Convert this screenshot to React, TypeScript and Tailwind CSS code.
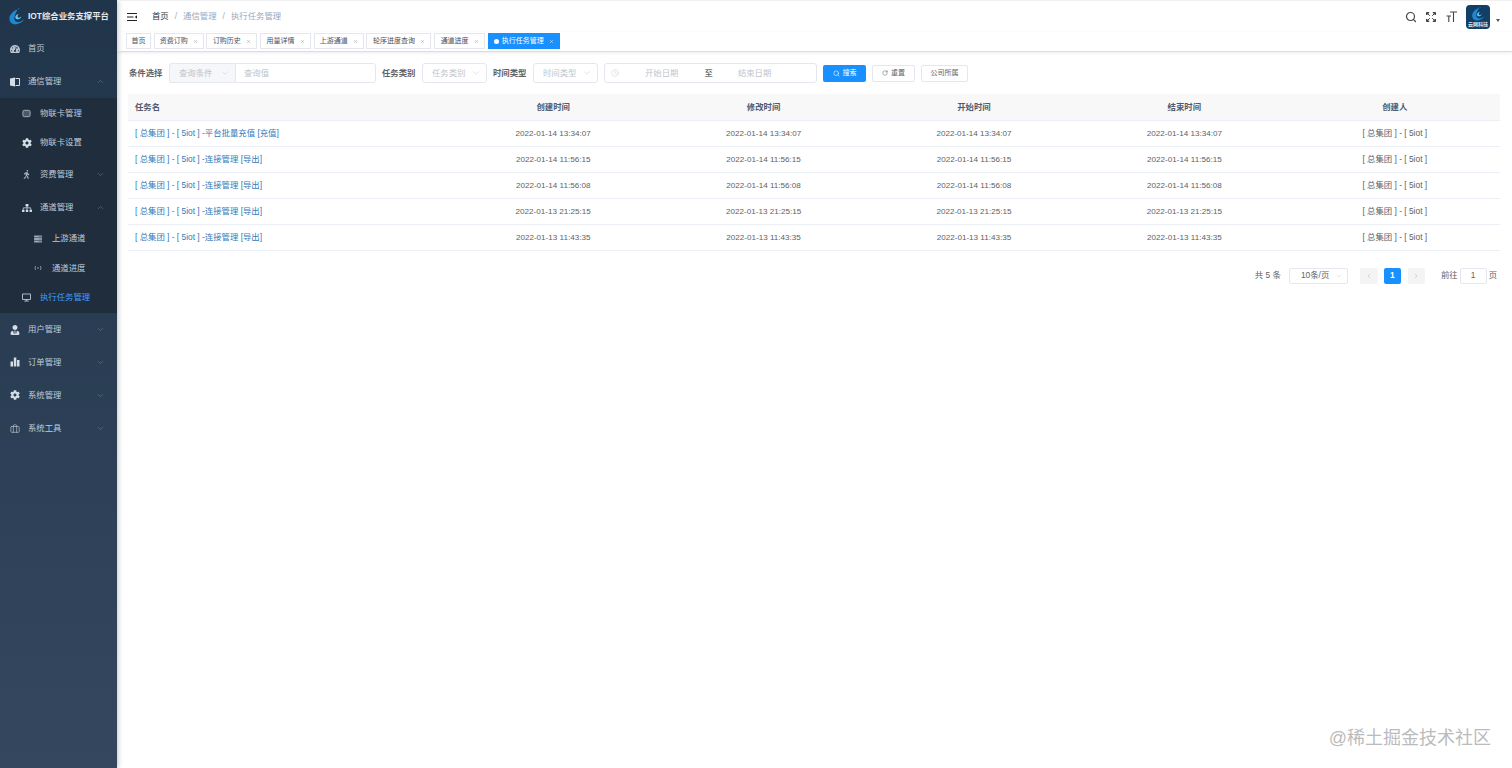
import React from "react";
import { ChevronDown, ChevronUp, ChevronLeft, ChevronRight, Search, Clock, RotateCw, X, Briefcase } from "lucide-react";
import { FaTachometerAlt, FaCog, FaSitemap, FaUserTie, FaDesktop, FaWalking, FaServer } from "react-icons/fa";

const font = "[font-family:'Liberation_Sans','Noto_Sans_CJK_SC',sans-serif]";

function Swirl({ className }: { className: string }) {
  return (
    <svg viewBox="0 0 24 24" className={className} fill="none">
      <path d="M16 1C8 3 1.500 9 2 16c.4 5 5 8 10 7 5-.8 9-3.500 11-7-3 2.500-6 4-9 3.700-3.500-.4-5.500-2.700-5-6 .6-4.500 3-10 7-14.700Z" fill="#1f86d0" />
      <path d="M15 8c-3 1-5 3-4.700 5.500.3 2 2.500 3 4.700 2.300 2-.6 3.300-2 3.800-3.800-1 1-2.300 1.700-3.600 1.600-1.400-.1-2-1-1.700-2.200.2-1.200.8-2.200 1.500-3.400Z" fill="#62c6f0" />
    </svg>
  );
}

type IconProps = { className?: string };

function BookIcon({ className }: IconProps) {
  return (
    <svg viewBox="0 0 10 10" className={className}>
      <path d="M0 1.500 5 .5v9l-5-1Z" fill="currentColor" />
      <path d="M5.500 1.500h4v7h-4" fill="none" stroke="currentColor" strokeWidth="1" />
    </svg>
  );
}
function CardIcon({ className }: IconProps) {
  return (
    <svg viewBox="0 0 10 10" className={className}>
      <rect x="1" y="1.500" width="8" height="7" rx="1.500" fill="#4a5866" stroke="currentColor" strokeWidth="1" />
    </svg>
  );
}
function SignalIcon({ className }: IconProps) {
  return (
    <svg viewBox="0 0 10 10" className={className} fill="none" stroke="currentColor" strokeWidth="1">
      <circle cx="5" cy="5" r="1" fill="currentColor" stroke="none" />
      <path d="M2 2.500Q.5 5 2 7.500M8 2.500Q9.500 5 8 7.500" />
    </svg>
  );
}
function BarsIcon({ className }: IconProps) {
  return (
    <svg viewBox="0 0 10 10" className={className} fill="currentColor">
      <rect x="0.500" y="4.500" width="2.500" height="5" />
      <rect x="3.800" y="0.500" width="2.500" height="9" />
      <rect x="7" y="3" width="2.500" height="6.500" />
    </svg>
  );
}
function ExpandIcon({ className }: IconProps) {
  return (
    <svg viewBox="0 0 10 10" className={className} fill="#444" stroke="#444" strokeWidth="1">
      <path d="M.5.5h2.500L.5 3ZM9.500.5H7L9.500 3ZM.5 9.500H3L.5 7ZM9.500 9.500H7L9.500 7Z" />
      <path d="M1.500 1.500l2.300 2.300M8.500 1.500 6.200 3.800M1.500 8.500l2.300-2.300M8.500 8.500 6.200 6.200" fill="none" />
    </svg>
  );
}
function ToolsIcon({ className }: IconProps) {
  return <Briefcase className={className} strokeWidth={1.6} />;
}

type Item = { label: string; Icon: React.ComponentType<IconProps>; h: string; level: 0 | 1 | 2; chevron?: "up" | "down"; active?: boolean; iconCls: string };

const strong = "h-[10px] w-[10px] text-[#d5dde6]";
const soft = "h-[9px] w-[9px] text-[#aab6c3]";
const tiny = "h-[8px] w-[8px] text-[#9aa7b5]";

const before: Item[] = [
  { label: "首页", Icon: FaTachometerAlt, h: "h-[33px]", level: 0, iconCls: "h-[10px] w-[10px] text-[#b9c4cf]" },
  { label: "通信管理", Icon: BookIcon, h: "h-[33px]", level: 0, chevron: "up", iconCls: strong },
];
const sub: Item[] = [
  { label: "物联卡管理", Icon: CardIcon, h: "h-[30px]", level: 1, iconCls: soft },
  { label: "物联卡设置", Icon: FaCog, h: "h-[29px]", level: 1, iconCls: strong },
  { label: "资费管理", Icon: FaWalking, h: "h-[34px]", level: 1, chevron: "down", iconCls: soft },
  { label: "通道管理", Icon: FaSitemap, h: "h-[33px]", level: 1, chevron: "up", iconCls: strong },
  { label: "上游通道", Icon: FaServer, h: "h-[29px]", level: 2, iconCls: tiny },
  { label: "通道进度", Icon: SignalIcon, h: "h-[30px]", level: 2, iconCls: tiny },
  { label: "执行任务管理", Icon: FaDesktop, h: "h-[29px]", level: 1, active: true, iconCls: soft },
];
const after: Item[] = [
  { label: "用户管理", Icon: FaUserTie, h: "h-[33px]", level: 0, chevron: "down", iconCls: strong },
  { label: "订单管理", Icon: BarsIcon, h: "h-[32px]", level: 0, chevron: "down", iconCls: strong },
  { label: "系统管理", Icon: FaCog, h: "h-[34px]", level: 0, chevron: "down", iconCls: strong },
  { label: "系统工具", Icon: ToolsIcon, h: "h-[33px]", level: 0, chevron: "down", iconCls: "h-[10px] w-[10px] text-[#b9c4cf]" },
];

function MenuRow({ item }: { item: Item }) {
  const { Icon } = item;
  const pad = item.level === 0 ? "pl-[10px]" : item.level === 1 ? "pl-[22px]" : "pl-[34px]";
  return (
    <div className={`flex items-center ${item.h} ${pad} pr-[12px] ${item.active ? "text-[#409eff]" : "text-[#bfcbd9]"}`}>
      <span className="flex w-[18px] shrink-0 items-center">
        <Icon className={item.iconCls} />
      </span>
      <span className="flex-1 text-[8.4px]">{item.label}</span>
      {item.chevron === "up" && <ChevronUp className="h-[9px] w-[9px] text-[#7f8c9b]" strokeWidth={1.2} />}
      {item.chevron === "down" && <ChevronDown className="h-[9px] w-[9px] text-[#7f8c9b]" strokeWidth={1.2} />}
    </div>
  );
}

function Sidebar() {
  return (
    <aside className="flex h-full w-[117px] shrink-0 flex-col bg-gradient-to-b from-[#21354a] to-[#34475f] shadow-[1px_0_5px_rgba(0,21,41,0.25)]">
      <div className="flex h-[32px] items-center pl-[8px]">
        <Swirl className="h-[17px] w-[17px] shrink-0" />
        <span className="ml-[3px] whitespace-nowrap text-[8.4px] font-bold text-[#e4e9ee]">IOT综合业务支撑平台</span>
      </div>
      {before.map((i) => <MenuRow key={i.label} item={i} />)}
      <div className="bg-[#1f2d3d] pb-[1px]">
        {sub.map((i) => <MenuRow key={i.label} item={i} />)}
      </div>
      <div>
        {after.map((i) => <MenuRow key={i.label} item={i} />)}
      </div>
    </aside>
  );
}

function Header() {
  return (
    <div className="flex h-[32px] items-center border-t border-[#f0f0f0] pl-[10px] pr-[12px] text-[8.4px]">
      <svg viewBox="0 0 10 8" className="h-[8px] w-[10px]">
        <path d="M0 .5h10M0 4h6.500M0 7.500h10" stroke="#222" strokeWidth="1" />
        <path d="M10 2.200v3.600L7.800 4Z" fill="#222" />
      </svg>
      <span className="ml-[15px] text-[#303133]">首页</span>
      <span className="mx-[6px] text-[#a8abb2]">/</span>
      <span className="text-[#97a8be]">通信管理</span>
      <span className="mx-[6px] text-[#a8abb2]">/</span>
      <span className="text-[#97a8be]">执行任务管理</span>
      <div className="ml-auto flex items-center">
        <Search className="h-[12px] w-[12px] text-[#444]" strokeWidth={2.4} />
        <ExpandIcon className="ml-[9px] h-[10px] w-[10px]" />
        <svg viewBox="0 0 11 11" className="ml-[10px] h-[11px] w-[11px]" fill="none" stroke="#444" strokeWidth="1.100">
          <path d="M4 1h7M7.500 1v10M.5 5h4.500M2.800 5v6" />
        </svg>
        <div className="ml-[9px] flex h-[24px] w-[24px] flex-col items-center justify-center rounded-[4px] bg-[#123f66]">
          <Swirl className="h-[14px] w-[14px]" />
          <span className="whitespace-nowrap text-[5px] font-bold leading-[6px] text-[#dbe8f2]">云网科技</span>
        </div>
        <span className="ml-[6px] mt-[8px] h-0 w-0 border-x-[2px] border-t-[3px] border-x-transparent border-t-[#555]" />
      </div>
    </div>
  );
}

const tags = [
  ["首页", "w-[25px]", false],
  ["资费订购", "w-[50px]", true],
  ["订购历史", "w-[51px]", true],
  ["用量详情", "w-[51px]", true],
  ["上游通道", "w-[50px]", true],
  ["轮序进度查询", "w-[65px]", true],
  ["通道进度", "w-[51px]", true],
] as const;

function Tags() {
  return (
    <div className="flex h-[20px] items-start gap-[2.700px] border-b border-[#d8dce5] pl-[9px] pt-[1px] shadow-[0_1px_3px_rgba(0,0,0,0.08)]">
      {tags.map(([t, w, close]) => (
        <div key={t} className={`flex h-[16px] ${w} items-center justify-center border border-[#e4e7ed] bg-white text-[7px] text-[#495060]`}>
          <span className="whitespace-nowrap">{t}</span>
          {close && <X className="ml-[5px] h-[5px] w-[5px] text-[#8a8f99]" strokeWidth={2} />}
        </div>
      ))}
      <div className="flex h-[16px] w-[72px] items-center justify-center border border-[#1890ff] bg-[#1890ff] text-[7px] text-white">
        <span className="mr-[3px] h-[5px] w-[5px] rounded-full bg-white" />
        <span className="whitespace-nowrap">执行任务管理</span>
        <X className="ml-[5px] h-[5px] w-[5px]" strokeWidth={2} />
      </div>
    </div>
  );
}

function SelectBox({ label, className }: { label: string; className: string }) {
  return (
    <div className={`flex h-[20px] items-center justify-between rounded-[3px] border border-[#e4e7ed] pl-[9px] pr-[5px] text-[8.400px] text-[#c0c4cc] ${className}`}>
      <span className="whitespace-nowrap">{label}</span>
      <ChevronDown className="h-[10px] w-[10px] text-[#c0c4cc]" strokeWidth={1.2} />
    </div>
  );
}

function FilterLabel({ children, className }: { children: React.ReactNode; className: string }) {
  return <span className={`whitespace-nowrap text-[8.400px] font-bold text-[#606266] ${className}`}>{children}</span>;
}

function Filters() {
  return (
    <div className="flex h-[20px] items-center">
      <FilterLabel className="ml-[1px] w-[40px]">条件选择</FilterLabel>
      <SelectBox label="查询条件" className="w-[66px] rounded-r-none border-r-0 bg-[#f5f7fa]" />
      <div className="flex h-[20px] w-[141px] items-center rounded-r-[3px] border border-[#e4e7ed] pl-[8px] text-[8.400px] text-[#c0c4cc]">查询值</div>
      <FilterLabel className="ml-[6px] w-[40px]">任务类别</FilterLabel>
      <SelectBox label="任务类别" className="w-[65px]" />
      <FilterLabel className="ml-[6px] w-[40px]">时间类型</FilterLabel>
      <SelectBox label="时间类型" className="w-[65px]" />
      <div className="ml-[6px] flex h-[20px] w-[213px] items-center rounded-[3px] border border-[#e4e7ed] pl-[6px] text-[8.400px] text-[#c0c4cc]">
        <Clock className="h-[8px] w-[8px]" strokeWidth={1.3} />
        <span className="ml-[26px] whitespace-nowrap">开始日期</span>
        <span className="ml-[26px] text-[#303133]">至</span>
        <span className="ml-[25px] whitespace-nowrap">结束日期</span>
      </div>
      <button className="ml-[6px] flex h-[17px] w-[43px] items-center justify-center gap-[3px] rounded-[2px] bg-[#1890ff] text-[7px] text-white">
        <Search className="h-[7px] w-[7px]" strokeWidth={2} />搜索
      </button>
      <button className="ml-[6px] flex h-[17px] w-[43px] items-center justify-center gap-[3px] rounded-[2px] border border-[#e4e7ed] text-[7px] text-[#606266]">
        <RotateCw className="h-[6px] w-[6px]" strokeWidth={2} />重置
      </button>
      <button className="ml-[6px] flex h-[17px] w-[47px] items-center justify-center rounded-[2px] border border-[#e4e7ed] text-[7px] text-[#606266]">公司所属</button>
    </div>
  );
}

const rows = [
  ["平台批量充值 [充值]", "2022-01-14 13:34:07"],
  ["连接管理 [导出]", "2022-01-14 11:56:15"],
  ["连接管理 [导出]", "2022-01-14 11:56:08"],
  ["连接管理 [导出]", "2022-01-13 21:25:15"],
  ["连接管理 [导出]", "2022-01-13 11:43:35"],
];
const heads = ["创建时间", "修改时间", "开始时间", "结束时间", "创建人"];

function TaskTable() {
  return (
    <table className="mt-[11px] w-full table-fixed border-collapse text-[8.400px]">
      <colgroup>
        <col className="w-[320px]" />
        <col /><col /><col /><col /><col />
      </colgroup>
      <thead>
        <tr className="h-[26px] border-b border-[#ebeef5] bg-[#f8f8f9] text-[#515a6e]">
          <th className="pl-[7px] pt-[2px] text-left font-bold">任务名</th>
          {heads.map((h) => <th key={h} className="pt-[2px] text-center font-bold">{h}</th>)}
        </tr>
      </thead>
      <tbody>
        {rows.map(([name, time], i) => (
          <tr key={i} className="h-[26px] border-b border-[#ebeef5] text-[#606266]">
            <td className="pl-[7px] pt-[1px] text-[#337ab7]">[ 总集团 ] - [ 5iot ] -{name}</td>
            <td className="pt-[2px] text-center text-[8.100px]">{time}</td>
            <td className="pt-[2px] text-center text-[8.100px]">{time}</td>
            <td className="pt-[2px] text-center text-[8.100px]">{time}</td>
            <td className="pt-[2px] text-center text-[8.100px]">{time}</td>
            <td className="pt-[1px] text-center">[ 总集团 ] - [ 5iot ]</td>
          </tr>
        ))}
      </tbody>
    </table>
  );
}

function Pagination() {
  return (
    <div className="mt-[17px] flex h-[16px] items-center justify-end pr-[3px] text-[8.400px] text-[#606266]">
      <span>共 5 条</span>
      <div className="ml-[8px] flex h-[16px] w-[59px] items-center justify-between rounded-[2px] border border-[#e4e7ed] pl-[11px] pr-[4px]">
        <span className="whitespace-nowrap">10条/页</span>
        <ChevronDown className="h-[8px] w-[8px] text-[#c0c4cc]" strokeWidth={1.2} />
      </div>
      <div className="ml-[12px] flex h-[16px] w-[18px] items-center justify-center rounded-[2px] bg-[#f4f4f5] text-[#b4b7bd]">
        <ChevronLeft className="h-[8px] w-[8px]" strokeWidth={1.5} />
      </div>
      <div className="ml-[6px] flex h-[16px] w-[17px] items-center justify-center rounded-[2px] bg-[#1890ff] font-bold text-white">1</div>
      <div className="ml-[7px] flex h-[16px] w-[17px] items-center justify-center rounded-[2px] bg-[#f4f4f5] text-[#b4b7bd]">
        <ChevronRight className="h-[8px] w-[8px]" strokeWidth={1.5} />
      </div>
      <span className="ml-[16px]">前往</span>
      <div className="ml-[2px] flex h-[16px] w-[27px] items-center justify-center rounded-[2px] border border-[#e4e7ed]">1</div>
      <span className="ml-[2px]">页</span>
    </div>
  );
}

export default function App() {
  return (
    <div className={`relative flex h-screen w-full overflow-hidden bg-white ${font}`}>
      <Sidebar />
      <main className="flex min-w-0 flex-1 flex-col">
        <Header />
        <Tags />
        <div className="pl-[11px] pr-[12px] pt-[11px]">
          <Filters />
          <TaskTable />
          <Pagination />
        </div>
      </main>
      <div className="absolute bottom-[18px] right-[21px] text-[18px] leading-[24px] text-[#bbbbbb]">@稀土掘金技术社区</div>
    </div>
  );
}
